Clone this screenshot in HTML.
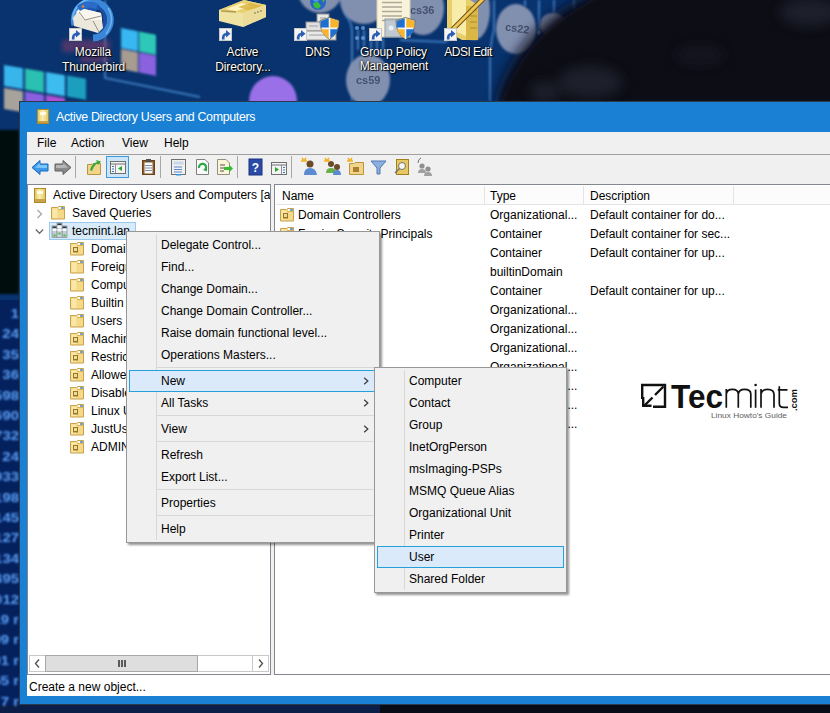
<!DOCTYPE html>
<html><head><meta charset="utf-8"><style>
*{margin:0;padding:0;box-sizing:border-box}
html,body{width:830px;height:713px;overflow:hidden}
body{position:relative;font-family:"Liberation Sans",sans-serif;font-size:12px;background:#0b2c62;color:#000}
.a{position:absolute}
.t{position:absolute;white-space:nowrap;line-height:18px;height:18px}
.dl{position:absolute;white-space:nowrap;color:#fff;line-height:15px;text-shadow:0 0 1px #000,1px 1px 1px #000,0 0 3px rgba(0,0,0,.6);text-align:center;width:120px}
.mi{position:absolute;white-space:nowrap;line-height:22px;height:22px}
.fold{position:absolute;width:14px;height:12px}
</style></head><body>
<svg class="a" style="left:0;top:0" width="830" height="713" viewBox="0 0 830 713">
<defs>
<filter id="b1" x="-20%" y="-20%" width="140%" height="140%"><feGaussianBlur stdDeviation="1"/></filter>
<filter id="b2" x="-20%" y="-20%" width="140%" height="140%"><feGaussianBlur stdDeviation="2.5"/></filter>
<filter id="b6" x="-50%" y="-50%" width="200%" height="200%"><feGaussianBlur stdDeviation="6"/></filter>
<radialGradient id="hair" cx="0.5" cy="0.5" r="0.5"><stop offset="0" stop-color="#0a0c12"/><stop offset="0.9" stop-color="#080a10"/><stop offset="1" stop-color="#0a1020"/></radialGradient>
</defs>
<rect width="830" height="713" fill="#0c2d66"/>
<rect x="0" y="0" width="830" height="713" fill="#08336e"/>
<!-- left strip -->
<rect x="-5" y="130" width="24" height="164" fill="#05070d" filter="url(#b1)"/>
<rect x="0" y="300" width="19" height="413" fill="#04215e"/>
<!-- circuit lines -->
<g stroke="#4f8fd8" stroke-width="2" fill="none" opacity="0.75" filter="url(#b1)">
<path d="M105 0 V78 L200 97"/>
<path d="M345 0 V14 Q352 22 352 32 V101"/>
<path d="M358 30 V50 M364 30 V50 M371 40 V55 M377 40 V55 M383 38 V55"/>
<path d="M494 0 V30 Q490 45 490 60 V101"/>
<path d="M400 40 L445 42 L455 35"/>
<path d="M525 0 V6 M539 0 V33 M554 0 V13 M574 0 V10"/>
</g>
<g fill="#6aa0e0" opacity="0.8"><circle cx="357" cy="28" r="2"/><circle cx="363" cy="28" r="2"/><circle cx="357" cy="38" r="2"/><circle cx="363" cy="38" r="2"/><circle cx="539" cy="33" r="2"/></g>
<!-- grey circles -->
<g fill="#8290b0" filter="url(#b1)">
<circle cx="320" cy="-9" r="22"/>
<circle cx="364" cy="0" r="24"/>
<ellipse cx="368" cy="80" rx="22" ry="26"/>
<ellipse cx="423" cy="8" rx="21" ry="27"/>
<ellipse cx="474" cy="10" rx="16" ry="30"/>
<ellipse cx="516" cy="29" rx="20" ry="25"/>
<ellipse cx="553" cy="25" rx="13" ry="12"/>
</g>
<g fill="#3c4660" font-family="Liberation Sans" font-size="11" font-weight="bold" opacity="0.85">
<text x="356" y="84">cs59</text><text x="410" y="14">cs36</text><text x="505" y="32" transform="rotate(8 516 29)">cs22</text>
</g>
<!-- purple circle -->
<ellipse cx="273" cy="101" rx="24" ry="25" fill="#9a6fe8" filter="url(#b1)"/>
<!-- head (dark) -->
<path d="M586 -6 C 552 10, 512 40, 493 104 L835 104 L835 -6 Z" fill="#0a0e1c" filter="url(#b6)" opacity="0.8"/>
<path d="M598 -4 C 562 14, 520 44, 500 104 L835 104 L835 -4 Z" fill="#080a15" filter="url(#b2)"/>
<g fill="#2a2e3c" opacity="0.55" filter="url(#b6)"><ellipse cx="590" cy="82" rx="32" ry="16"/><ellipse cx="545" cy="92" rx="15" ry="10"/><ellipse cx="810" cy="12" rx="30" ry="14"/><ellipse cx="700" cy="55" rx="25" ry="10" opacity="0.5"/></g>
<!-- bottom strip -->
<rect x="0" y="705" width="830" height="8" fill="#0a1e48"/>
<rect x="380" y="705" width="450" height="8" fill="#070b16"/>
<!-- tiles top-left -->
<g filter="url(#b1)" transform="translate(4 65) skewY(9.5) translate(-4 -65)">
<rect x="4" y="65" width="19" height="21" fill="#38b6ec"/>
<rect x="25" y="65" width="19" height="21" fill="#2cc0b2"/>
<rect x="46" y="65" width="19" height="21" fill="#3cbcf0"/>
<rect x="67" y="65" width="19" height="21" fill="#1c9fbf"/>
<rect x="4" y="88" width="19" height="21" fill="#a8a29c"/>
<rect x="25" y="88" width="19" height="21" fill="#8a5ee0"/>
<rect x="46" y="88" width="19" height="21" fill="#b050d8"/>
</g>
<g filter="url(#b1)" transform="translate(121 28) skewY(11) translate(-121 -28)">
<rect x="121" y="28" width="17" height="20" fill="#38b8f0"/>
<rect x="139" y="28" width="17" height="20" fill="#2ec8b8"/>
<rect x="121" y="49" width="17" height="20" fill="#a89c90"/>
<rect x="139" y="49" width="17" height="20" fill="#8a62e0"/>
</g>
<g fill="#8a3a6a" opacity="0.55" filter="url(#b2)"><rect x="62" y="40" width="48" height="12"/><rect x="80" y="55" width="30" height="8"/></g>
<!-- numbers on left strip -->
<g fill="#5a9ef4" font-family="Liberation Sans" font-size="13" font-weight="bold" text-anchor="end" filter="url(#b1)" opacity="1" transform="translate(19 0) scale(1.15 1) translate(-19 0)"><text x="19" y="318.0">1</text><text x="19" y="338.4">24</text><text x="19" y="358.8">35</text><text x="19" y="379.2">36</text><text x="19" y="399.6">598</text><text x="19" y="420.0">690</text><text x="19" y="440.4">732</text><text x="19" y="460.8">24</text><text x="19" y="481.2">933</text><text x="19" y="501.6">198</text><text x="19" y="522.0">145</text><text x="19" y="542.4">127</text><text x="19" y="562.8">134</text><text x="19" y="583.2">1495</text><text x="19" y="603.6">012</text><text x="19" y="624.0">19 r</text><text x="19" y="644.4">09 r</text><text x="19" y="664.8">01 r</text><text x="19" y="685.2">55 r</text><text x="19" y="705.6">7 r</text></g>
</svg>
<svg class="a" style="left:0;top:0" width="600" height="101" viewBox="0 0 600 101">
<!-- thunderbird -->
<path d="M75 25 A18 18 0 1 1 93 38" fill="none" stroke="#3a86d8" stroke-width="7"/>
<path d="M73 20 A20 20 0 0 1 90 -1" fill="none" stroke="#6ab4f0" stroke-width="2"/>
<path d="M80 23 A13 13 0 1 1 96 32" fill="none" stroke="#1c4fa2" stroke-width="3"/>
<path d="M108 8 Q116 20 106 34" fill="none" stroke="#7ac0f4" stroke-width="1.5" opacity="0.8"/>
<ellipse cx="89" cy="7" rx="11" ry="5" fill="#1f58b0"/>
<path d="M73 18 L80 8 L101 13 L103 28 L98 33 L74 26 Z" fill="#ece8dc"/>
<path d="M76 12 L80 8 L101 13 L102 20 L84 20 Z" fill="#f8f6ee"/>
<path d="M79 12 L85 20 L101 16 M93 21 L99 32" fill="none" stroke="#8a8578" stroke-width="0.9"/>
<path d="M77 6 Q86 -1 98 4 L96 9 Q88 5 80 11 Z" fill="#2a6cc8"/>
<circle cx="83" cy="6.5" r="1.2" fill="#f08020"/>
<!-- AD slab -->
<path d="M219 10 L244 0 L266 5 L266 17 L243 27 L219 21 Z" fill="#efe3a4"/>
<path d="M219 10 L244 0 L266 5 L243 13 Z" fill="#e8d070"/>
<path d="M226 9 L242 3 L252 6 L236 11 Z" fill="#fff4c0"/>
<path d="M238 7 L250 3 L262 6 L248 10 Z" fill="#d8b040" opacity="0.8"/>
<path d="M221 11 L236 12" stroke="#8a7020" stroke-width="1.5" opacity="0.6"/>
<path d="M243 13 L266 5 L266 17 L243 27 Z" fill="#ecdc9a"/>
<path d="M255 12 V14 M258 11 V13 M261 10 V12" stroke="#8a8060" stroke-width="1.2"/>
<!-- DNS -->
<circle cx="318" cy="2" r="8" fill="#2a62c8"/><path d="M313 3 L318 2 L321 6 L318 9 L314 7Z" fill="#38c038"/><path d="M322 -2 L325 0 L323 3Z" fill="#38c038"/><circle cx="316" cy="-1" r="3" fill="#5ab0f0" opacity="0.7"/>
<rect x="317" y="14" width="12" height="10" fill="#e8e8e8" stroke="#909090"/>
<rect x="306" y="22" width="16" height="9" fill="#e0e0e0" stroke="#909090"/>
<rect x="306" y="31" width="30" height="9" fill="#e8e8e8" stroke="#909090"/>
<path d="M309 26 H318 M309 35 H330 M320 18 H326" stroke="#a0a0a0"/>
<!-- GPM -->
<rect x="377" y="-2" width="33" height="39" fill="#f8f3da" stroke="#d8d0b0"/>
<path d="M382 2.5 H402 M382 7 H402 M382 11.5 H402 M382 16 H402 M382 20.5 H398" stroke="#b0a898" stroke-width="1.3"/>
<rect x="385" y="19" width="16" height="18" fill="#b8c4d0" stroke="#8090a0" opacity="0.85"/>
<circle cx="391" cy="28" r="2.5" fill="#e8eef4"/>
<!-- ADSI -->
<path d="M447 0 L470 0 L478 5 L478 40 L462 40 L447 32 Z" fill="#e8cf6a"/>
<path d="M452 0 L466 0 L466 36 L452 30 Z" fill="#f8eca8"/>
<path d="M466 6 L478 6 L478 40 L466 40Z" fill="#d9b848"/>
<path d="M470 10 H477 M470 16 H477 M470 22 H477 M470 28 H477" stroke="#b08a28"/>
<path d="M452 30 L484 -2" stroke="#6a5020" stroke-width="5"/>
<path d="M452 30 L484 -2" stroke="#f0c850" stroke-width="3"/>
<path d="M449 34 L452 28 L455 31 Z" fill="#303030"/>
</svg>
<svg class="a" style="left:319px;top:17px" width="21" height="23" viewBox="0 0 21 23"><path d="M10.5 0.5 L20 3.5 Q20.5 16 10.5 22.5 Q0.5 16 1 3.5 Z" fill="#f4f4f4" stroke="#5a5a40" stroke-width="0.8"/><path d="M11.3 1.3 L19.3 3.9 L19.3 10.6 L11.3 10.6Z" fill="#f7b42c"/><path d="M9.7 1.3 L1.7 3.9 L1.7 10.6 L9.7 10.6Z" fill="#1f6fd0"/><path d="M1.8 12.2 L9.7 12.2 L9.7 21.2 Q3 16.5 1.8 12.2Z" fill="#f7b42c"/><path d="M19.2 12.2 L11.3 12.2 L11.3 21.2 Q18 16.5 19.2 12.2Z" fill="#1f6fd0"/></svg>
<svg class="a" style="left:395px;top:17px" width="21" height="23" viewBox="0 0 21 23"><path d="M10.5 0.5 L20 3.5 Q20.5 16 10.5 22.5 Q0.5 16 1 3.5 Z" fill="#f4f4f4" stroke="#5a5a40" stroke-width="0.8"/><path d="M11.3 1.3 L19.3 3.9 L19.3 10.6 L11.3 10.6Z" fill="#f7b42c"/><path d="M9.7 1.3 L1.7 3.9 L1.7 10.6 L9.7 10.6Z" fill="#1f6fd0"/><path d="M1.8 12.2 L9.7 12.2 L9.7 21.2 Q3 16.5 1.8 12.2Z" fill="#f7b42c"/><path d="M19.2 12.2 L11.3 12.2 L11.3 21.2 Q18 16.5 19.2 12.2Z" fill="#1f6fd0"/></svg>
<svg class="a" style="left:69px;top:28px" width="13" height="13" viewBox="0 0 13 13"><rect x="0.5" y="0.5" width="12" height="12" fill="#f4f4f4" stroke="#c8c8c8"/><path d="M2.8 11.5 Q2.5 5.5 7 4.8 L7 2 L11.5 5.8 L7 9.6 L7 7.6 Q5.2 7.8 5.6 11.5 Z" fill="#2c5fb4"/></svg>
<svg class="a" style="left:219px;top:28px" width="13" height="13" viewBox="0 0 13 13"><rect x="0.5" y="0.5" width="12" height="12" fill="#f4f4f4" stroke="#c8c8c8"/><path d="M2.8 11.5 Q2.5 5.5 7 4.8 L7 2 L11.5 5.8 L7 9.6 L7 7.6 Q5.2 7.8 5.6 11.5 Z" fill="#2c5fb4"/></svg>
<svg class="a" style="left:294px;top:28px" width="13" height="13" viewBox="0 0 13 13"><rect x="0.5" y="0.5" width="12" height="12" fill="#f4f4f4" stroke="#c8c8c8"/><path d="M2.8 11.5 Q2.5 5.5 7 4.8 L7 2 L11.5 5.8 L7 9.6 L7 7.6 Q5.2 7.8 5.6 11.5 Z" fill="#2c5fb4"/></svg>
<svg class="a" style="left:369px;top:28px" width="13" height="13" viewBox="0 0 13 13"><rect x="0.5" y="0.5" width="12" height="12" fill="#f4f4f4" stroke="#c8c8c8"/><path d="M2.8 11.5 Q2.5 5.5 7 4.8 L7 2 L11.5 5.8 L7 9.6 L7 7.6 Q5.2 7.8 5.6 11.5 Z" fill="#2c5fb4"/></svg>
<svg class="a" style="left:444px;top:28px" width="13" height="13" viewBox="0 0 13 13"><rect x="0.5" y="0.5" width="12" height="12" fill="#f4f4f4" stroke="#c8c8c8"/><path d="M2.8 11.5 Q2.5 5.5 7 4.8 L7 2 L11.5 5.8 L7 9.6 L7 7.6 Q5.2 7.8 5.6 11.5 Z" fill="#2c5fb4"/></svg>
<div class="dl" style="left:33px;top:44.5px;letter-spacing:-0.15px">Mozilla</div>
<div class="dl" style="left:33.5px;top:59.5px;letter-spacing:-0.15px">Thunderbird</div>
<div class="dl" style="left:182.5px;top:45.0px;letter-spacing:-0.15px">Active</div>
<div class="dl" style="left:183px;top:59.5px;letter-spacing:-0.15px">Directory...</div>
<div class="dl" style="left:257.5px;top:44.5px;letter-spacing:-0.15px">DNS</div>
<div class="dl" style="left:333.5px;top:44.5px;letter-spacing:-0.15px">Group Policy</div>
<div class="dl" style="left:334px;top:58.5px;letter-spacing:-0.15px">Management</div>
<div class="dl" style="left:408px;top:44.5px;letter-spacing:-0.5px">ADSI Edit</div>
<div class="a" style="left:19px;top:101px;width:830px;height:604px;background:#1a80d4;border:1px solid #2a3a4a;border-right:none"></div>
<div class="a" style="left:37px;top:109px;width:12px;height:15px;background:linear-gradient(90deg,#e3c868,#fbeeb0 45%,#e3c868);border:1px solid #b08a28"></div>
<div class="a" style="left:40px;top:112px;width:6px;height:3px;background:#fffbe6"></div>
<div class="a" style="left:38px;top:121px;width:10px;height:2px;background:#c9a040"></div>
<div class="t" style="left:56px;top:108px;color:#fff;font-size:12.4px;letter-spacing:-0.32px">Active Directory Users and Computers</div>
<div class="a" style="left:27px;top:132px;width:803px;height:564px;background:#f0f0f0"></div>
<div class="t" style="left:37px;top:134px;color:#000;">File</div>
<div class="t" style="left:71px;top:134px;color:#000;">Action</div>
<div class="t" style="left:122px;top:134px;color:#000;">View</div>
<div class="t" style="left:164px;top:134px;color:#000;">Help</div>
<div class="a" style="left:27px;top:154px;width:803px;height:1px;background:#a0a0a0"></div>
<svg class="a" style="left:27px;top:155px" width="420" height="29" viewBox="27 155 420 29">
<!-- separators -->
<path d="M75.5 156 V178 M160.5 156 V178 M237.5 156 V178 M291.5 156 V178" stroke="#a8a8a8"/>
<!-- back arrow (blue) -->
<path d="M32 167.5 L40 160.5 L40 164 L48 164 L48 171 L40 171 L40 174.5 Z" fill="#3a9ae8" stroke="#1a68c0" stroke-width="1"/>
<path d="M35 167.5 L40 163 L40 165 L47 165 L47 168 L40 168Z" fill="#8fd0ff" opacity="0.8"/>
<!-- forward arrow (grey) -->
<path d="M71 167.5 L63 160.5 L63 164 L55 164 L55 171 L63 171 L63 174.5 Z" fill="#8a8a8a" stroke="#606060" stroke-width="1"/>
<path d="M68 167.5 L63 163 L63 165 L56 165 L56 168 L63 168Z" fill="#c0c0c0" opacity="0.8"/>
<!-- up folder -->
<path d="M87.5 164.5 H92 L93 163.5 H100.5 V174.5 H87.5 Z" fill="#f1d48a" stroke="#b8963e"/>
<path d="M90 170 Q92 163 97 162 L96 160 L101 161.5 L98 165 L97.5 163.5 Q94 165 92 171Z" fill="#3aa83a"/>
<!-- pressed show/hide tree -->
<rect x="106.5" y="156.5" width="22" height="21" fill="#cce4f7" stroke="#3c9ae0"/>
<rect x="110.5" y="161.5" width="15" height="12" fill="#f4f4f4" stroke="#707070"/>
<path d="M111 164 H125" stroke="#707070"/>
<path d="M115.5 164 V173" stroke="#909090"/>
<path d="M112 166.5 H114 M112 169 H114 M112 171.5 H114" stroke="#3a78c8"/>
<path d="M122 166 L118 168.5 L122 171 Z" fill="#2aa82a"/>
<!-- clipboard -->
<rect x="142.5" y="160.5" width="12" height="14" fill="#8a5a2a" stroke="#6a4018"/>
<rect x="144.5" y="162.5" width="8" height="11" fill="#fafafa"/>
<path d="M145 165.5 H152 M145 168 H152 M145 170.5 H152" stroke="#8090a8"/>
<rect x="146" y="159" width="5" height="3" fill="#505050"/>
<!-- properties window -->
<rect x="171.5" y="159.5" width="14" height="15" fill="#f0f0f0" stroke="#707070"/>
<rect x="173.5" y="161.5" width="10" height="3" fill="#c8d8e8"/>
<path d="M174 167 H182 M174 169.5 H182 M174 172 H182" stroke="#5a88c8"/>
<rect x="176" y="174" width="5" height="1.5" fill="#2a98e8"/>
<!-- refresh doc -->
<path d="M196.5 159.5 H205 L208.5 163 V174.5 H196.5 Z" fill="#fafafa" stroke="#808080"/>
<path d="M199 168 A3.6 3.6 0 1 1 205.5 169.5" fill="none" stroke="#2aa84a" stroke-width="2.2"/>
<path d="M203 170 L207 171.5 L207 167 Z" fill="#2aa84a"/>
<!-- export list -->
<path d="M217.5 159.5 H226 L229.5 163 V174.5 H217.5 Z" fill="#fbf4d8" stroke="#909080"/>
<path d="M220 165 H225 M220 168 H224 M220 171 H224" stroke="#505050"/>
<path d="M224 167 H229 V164.5 L233 168.5 L229 172.5 V170 H224 Z" fill="#3ab83a"/>
<!-- help -->
<rect x="249" y="159" width="13" height="16" fill="#2a4aa8" stroke="#1a3080"/>
<text x="255.5" y="172" font-family="Liberation Sans" font-size="12" font-weight="bold" fill="#fff" text-anchor="middle">?</text>
<!-- action pane -->
<rect x="271.5" y="162.5" width="15" height="12" fill="#f4f4f4" stroke="#707070"/>
<path d="M272 165 H286" stroke="#707070"/>
<path d="M281.5 165 V174" stroke="#909090"/>
<path d="M283 167.5 H285 M283 170 H285 M283 172.5 H285" stroke="#3a78c8"/>
<path d="M275 167 L279 169.5 L275 172 Z" fill="#2aa82a"/>
<!-- new user -->
<circle cx="310" cy="164" r="3.5" fill="#6a4a2a"/>
<path d="M304 175 Q304 168 310 168 Q316 168 317 175 Z" fill="#5a8ad0"/>
<path d="M302 158 L304 161 M306 158 L304 161 M301 161 H307" stroke="#f5b020" stroke-width="1.5"/>
<!-- new group -->
<circle cx="331" cy="164" r="3" fill="#6a4a2a"/>
<path d="M326 173 Q326 168 331 168 Q336 168 336 173 Z" fill="#6ab04a"/>
<circle cx="337" cy="167" r="3" fill="#6a4a2a"/>
<path d="M333 175 Q333 170 337 170 Q341 170 341 175 Z" fill="#5a8ad0"/>
<path d="M325 158 L327 161 M329 158 L327 161 M324 161 H330" stroke="#f5b020" stroke-width="1.5"/>
<!-- new OU -->
<path d="M349.5 163.5 H354 L355 162.5 H363.5 V174.5 H349.5 Z" fill="#f1d48a" stroke="#b8963e"/>
<rect x="353" y="167" width="6" height="5" fill="#a88030"/>
<path d="M348 158 L350 161 M352 158 L350 161 M347 161 H353" stroke="#f5b020" stroke-width="1.5"/>
<!-- filter -->
<path d="M371 161 H386 L380 168 V174 L377 174 V168 Z" fill="#8ab0e0" stroke="#5078b0"/>
<!-- find -->
<rect x="396.5" y="159.5" width="12" height="15" fill="#e8c860" stroke="#a08020"/>
<circle cx="402" cy="166" r="3.5" fill="#f8f8f0" stroke="#707070"/>
<path d="M399.5 168.5 L395 173" stroke="#707070" stroke-width="1.5"/>
<!-- add to group -->
<circle cx="422" cy="166" r="2.6" fill="#909090"/><path d="M418 173 Q418 169 422 169 Q426 169 426 173Z" fill="#a0a0a0"/>
<circle cx="428" cy="169" r="2.6" fill="#909090"/><path d="M424 176 Q424 172 428 172 Q432 172 432 176Z" fill="#a0a0a0"/>
<path d="M418 163 Q418 159 421 158" fill="none" stroke="#707070"/>
</svg>
<div class="a" style="left:27px;top:184px;width:244px;height:491px;background:#fff;border:1px solid #828790"></div>
<div class="a" style="left:274px;top:184px;width:560px;height:491px;background:#fff;border:1px solid #828790"></div>
<div class="a" style="left:28px;top:185px;width:242px;height:470px;overflow:hidden">
<div class="t" style="left:25px;top:0.5px;">Active Directory Users and Computers [addc.tecmint.lan]</div>
<div class="t" style="left:44px;top:18.5px;">Saved Queries</div>
<div class="a" style="left:21px;top:37px;width:87px;height:18px;background:#d9ebf9;border:1px solid #99c9ef"></div>
<div class="t" style="left:44px;top:36.5px;">tecmint.lan</div>
<div class="t" style="left:63px;top:54.5px;">Domain Controllers</div>
<div class="t" style="left:63px;top:72.5px;">ForeignSecurityPrincipals</div>
<div class="t" style="left:63px;top:90.5px;">Computers</div>
<div class="t" style="left:63px;top:108.5px;">Builtin</div>
<div class="t" style="left:63px;top:126.5px;">Users</div>
<div class="t" style="left:63px;top:144.5px;">Machines</div>
<div class="t" style="left:63px;top:162.5px;">Restricted</div>
<div class="t" style="left:63px;top:180.5px;">Allowed</div>
<div class="t" style="left:63px;top:198.5px;">Disabled</div>
<div class="t" style="left:63px;top:216.5px;">Linux Users</div>
<div class="t" style="left:63px;top:234.5px;">JustUsers</div>
<div class="t" style="left:63px;top:252.5px;">ADMINS</div>
</div>
<div class="a" style="left:34px;top:188px;width:12px;height:15px;background:linear-gradient(90deg,#e3c868,#fbeeb0 45%,#e3c868);border:1px solid #b08a28"></div>
<div class="a" style="left:37px;top:191px;width:6px;height:3px;background:#fffbe6"></div>
<div class="a" style="left:35px;top:199px;width:10px;height:3px;background:#c9a24a"></div>
<svg class="a" style="left:51px;top:206px" width="15" height="14" viewBox="0 0 15 14"><path d="M0.5 13 V1.5 H6.5 L7.5 0.5 H13.5 V13 Z" fill="#f5d888" stroke="#c9a24e"/><path d="M1.5 2.5 H6.5 V12 H1.5Z" fill="#fbe7a6"/><path d="M7 3.5 H13" stroke="#d9b65e"/><rect x="8" y="1.2" width="2.2" height="1.6" fill="#ffffff"/><rect x="10.2" y="1.2" width="2.5" height="1.6" fill="#3a8ae8"/></svg>
<svg class="a" style="left:70px;top:242px" width="15" height="14" viewBox="0 0 15 14"><path d="M0.5 13 V1.5 H6.5 L7.5 0.5 H13.5 V13 Z" fill="#f5d888" stroke="#c9a24e"/><path d="M1.5 2.5 H6.5 V12 H1.5Z" fill="#fbe7a6"/><path d="M7 3.5 H13" stroke="#d9b65e"/><rect x="8" y="1.2" width="2.2" height="1.6" fill="#ffffff"/><rect x="10.2" y="1.2" width="2.5" height="1.6" fill="#3a8ae8"/><rect x="3" y="5" width="5" height="5.5" fill="#9a7420"/><rect x="4" y="6" width="3" height="3" fill="#e8dca0"/></svg>
<svg class="a" style="left:70px;top:260px" width="15" height="14" viewBox="0 0 15 14"><path d="M0.5 13 V1.5 H6.5 L7.5 0.5 H13.5 V13 Z" fill="#f5d888" stroke="#c9a24e"/><path d="M1.5 2.5 H6.5 V12 H1.5Z" fill="#fbe7a6"/><path d="M7 3.5 H13" stroke="#d9b65e"/><rect x="8" y="1.2" width="2.2" height="1.6" fill="#ffffff"/><rect x="10.2" y="1.2" width="2.5" height="1.6" fill="#3a8ae8"/></svg>
<svg class="a" style="left:70px;top:278px" width="15" height="14" viewBox="0 0 15 14"><path d="M0.5 13 V1.5 H6.5 L7.5 0.5 H13.5 V13 Z" fill="#f5d888" stroke="#c9a24e"/><path d="M1.5 2.5 H6.5 V12 H1.5Z" fill="#fbe7a6"/><path d="M7 3.5 H13" stroke="#d9b65e"/><rect x="8" y="1.2" width="2.2" height="1.6" fill="#ffffff"/><rect x="10.2" y="1.2" width="2.5" height="1.6" fill="#3a8ae8"/></svg>
<svg class="a" style="left:70px;top:296px" width="15" height="14" viewBox="0 0 15 14"><path d="M0.5 13 V1.5 H6.5 L7.5 0.5 H13.5 V13 Z" fill="#f5d888" stroke="#c9a24e"/><path d="M1.5 2.5 H6.5 V12 H1.5Z" fill="#fbe7a6"/><path d="M7 3.5 H13" stroke="#d9b65e"/><rect x="8" y="1.2" width="2.2" height="1.6" fill="#ffffff"/><rect x="10.2" y="1.2" width="2.5" height="1.6" fill="#3a8ae8"/></svg>
<svg class="a" style="left:70px;top:314px" width="15" height="14" viewBox="0 0 15 14"><path d="M0.5 13 V1.5 H6.5 L7.5 0.5 H13.5 V13 Z" fill="#f5d888" stroke="#c9a24e"/><path d="M1.5 2.5 H6.5 V12 H1.5Z" fill="#fbe7a6"/><path d="M7 3.5 H13" stroke="#d9b65e"/><rect x="8" y="1.2" width="2.2" height="1.6" fill="#ffffff"/><rect x="10.2" y="1.2" width="2.5" height="1.6" fill="#3a8ae8"/></svg>
<svg class="a" style="left:70px;top:332px" width="15" height="14" viewBox="0 0 15 14"><path d="M0.5 13 V1.5 H6.5 L7.5 0.5 H13.5 V13 Z" fill="#f5d888" stroke="#c9a24e"/><path d="M1.5 2.5 H6.5 V12 H1.5Z" fill="#fbe7a6"/><path d="M7 3.5 H13" stroke="#d9b65e"/><rect x="8" y="1.2" width="2.2" height="1.6" fill="#ffffff"/><rect x="10.2" y="1.2" width="2.5" height="1.6" fill="#3a8ae8"/><rect x="3" y="5" width="5" height="5.5" fill="#9a7420"/><rect x="4" y="6" width="3" height="3" fill="#e8dca0"/></svg>
<svg class="a" style="left:70px;top:350px" width="15" height="14" viewBox="0 0 15 14"><path d="M0.5 13 V1.5 H6.5 L7.5 0.5 H13.5 V13 Z" fill="#f5d888" stroke="#c9a24e"/><path d="M1.5 2.5 H6.5 V12 H1.5Z" fill="#fbe7a6"/><path d="M7 3.5 H13" stroke="#d9b65e"/><rect x="8" y="1.2" width="2.2" height="1.6" fill="#ffffff"/><rect x="10.2" y="1.2" width="2.5" height="1.6" fill="#3a8ae8"/><rect x="3" y="5" width="5" height="5.5" fill="#9a7420"/><rect x="4" y="6" width="3" height="3" fill="#e8dca0"/></svg>
<svg class="a" style="left:70px;top:368px" width="15" height="14" viewBox="0 0 15 14"><path d="M0.5 13 V1.5 H6.5 L7.5 0.5 H13.5 V13 Z" fill="#f5d888" stroke="#c9a24e"/><path d="M1.5 2.5 H6.5 V12 H1.5Z" fill="#fbe7a6"/><path d="M7 3.5 H13" stroke="#d9b65e"/><rect x="8" y="1.2" width="2.2" height="1.6" fill="#ffffff"/><rect x="10.2" y="1.2" width="2.5" height="1.6" fill="#3a8ae8"/><rect x="3" y="5" width="5" height="5.5" fill="#9a7420"/><rect x="4" y="6" width="3" height="3" fill="#e8dca0"/></svg>
<svg class="a" style="left:70px;top:386px" width="15" height="14" viewBox="0 0 15 14"><path d="M0.5 13 V1.5 H6.5 L7.5 0.5 H13.5 V13 Z" fill="#f5d888" stroke="#c9a24e"/><path d="M1.5 2.5 H6.5 V12 H1.5Z" fill="#fbe7a6"/><path d="M7 3.5 H13" stroke="#d9b65e"/><rect x="8" y="1.2" width="2.2" height="1.6" fill="#ffffff"/><rect x="10.2" y="1.2" width="2.5" height="1.6" fill="#3a8ae8"/><rect x="3" y="5" width="5" height="5.5" fill="#9a7420"/><rect x="4" y="6" width="3" height="3" fill="#e8dca0"/></svg>
<svg class="a" style="left:70px;top:404px" width="15" height="14" viewBox="0 0 15 14"><path d="M0.5 13 V1.5 H6.5 L7.5 0.5 H13.5 V13 Z" fill="#f5d888" stroke="#c9a24e"/><path d="M1.5 2.5 H6.5 V12 H1.5Z" fill="#fbe7a6"/><path d="M7 3.5 H13" stroke="#d9b65e"/><rect x="8" y="1.2" width="2.2" height="1.6" fill="#ffffff"/><rect x="10.2" y="1.2" width="2.5" height="1.6" fill="#3a8ae8"/><rect x="3" y="5" width="5" height="5.5" fill="#9a7420"/><rect x="4" y="6" width="3" height="3" fill="#e8dca0"/></svg>
<svg class="a" style="left:70px;top:422px" width="15" height="14" viewBox="0 0 15 14"><path d="M0.5 13 V1.5 H6.5 L7.5 0.5 H13.5 V13 Z" fill="#f5d888" stroke="#c9a24e"/><path d="M1.5 2.5 H6.5 V12 H1.5Z" fill="#fbe7a6"/><path d="M7 3.5 H13" stroke="#d9b65e"/><rect x="8" y="1.2" width="2.2" height="1.6" fill="#ffffff"/><rect x="10.2" y="1.2" width="2.5" height="1.6" fill="#3a8ae8"/><rect x="3" y="5" width="5" height="5.5" fill="#9a7420"/><rect x="4" y="6" width="3" height="3" fill="#e8dca0"/></svg>
<svg class="a" style="left:70px;top:440px" width="15" height="14" viewBox="0 0 15 14"><path d="M0.5 13 V1.5 H6.5 L7.5 0.5 H13.5 V13 Z" fill="#f5d888" stroke="#c9a24e"/><path d="M1.5 2.5 H6.5 V12 H1.5Z" fill="#fbe7a6"/><path d="M7 3.5 H13" stroke="#d9b65e"/><rect x="8" y="1.2" width="2.2" height="1.6" fill="#ffffff"/><rect x="10.2" y="1.2" width="2.5" height="1.6" fill="#3a8ae8"/><rect x="3" y="5" width="5" height="5.5" fill="#9a7420"/><rect x="4" y="6" width="3" height="3" fill="#e8dca0"/></svg>
<svg class="a" style="left:35px;top:208px" width="9" height="12"><path d="M2.5 2 L6.5 6 L2.5 10" fill="none" stroke="#a6a6a6" stroke-width="1.3"/></svg>
<svg class="a" style="left:34px;top:227px" width="11" height="9"><path d="M1.8 2.5 L5.5 6.3 L9.2 2.5" fill="none" stroke="#6a6a6a" stroke-width="1.3"/></svg>
<svg class="a" style="left:51px;top:222px" width="17" height="17" viewBox="51 222 17 17"><rect x="52" y="226" width="5" height="11.5" fill="#c4ccd4" stroke="#8a929a" stroke-width="0.8"/><rect x="62" y="226" width="5" height="11.5" fill="#c4ccd4" stroke="#8a929a" stroke-width="0.8"/><rect x="57" y="223" width="5" height="14.5" fill="#d0d6dc" stroke="#8a929a" stroke-width="0.8"/><rect x="52.5" y="226.5" width="4" height="1.5" fill="#2a3444"/><rect x="62.5" y="226.5" width="4" height="1.5" fill="#2a3444"/><rect x="57.5" y="223.5" width="4" height="1.5" fill="#2a3444"/><rect x="52.5" y="229" width="4" height="2" fill="#fafafa"/><rect x="62.5" y="229" width="4" height="2" fill="#fafafa"/><rect x="57.5" y="226" width="4" height="2" fill="#fafafa"/><rect x="57.5" y="229" width="4" height="2" fill="#fafafa"/><rect x="53.5" y="234.5" width="2" height="2" fill="#38c038"/><rect x="63.5" y="234.5" width="2" height="2" fill="#38c038"/><rect x="58.5" y="232.5" width="2" height="2" fill="#38c038"/></svg>
<div class="a" style="left:29px;top:655px;width:240px;height:17px;background:#fff;border:1px solid #c8c8c8"></div>
<div class="a" style="left:45px;top:655px;width:153px;height:17px;background:#dedede;border:1px solid #a8a8a8"></div>
<div class="a" style="left:252px;top:656px;width:1px;height:15px;background:#c8c8c8"></div>
<svg class="a" style="left:33px;top:658px" width="9" height="11"><path d="M6 1.5 L2.5 5.5 L6 9.5" fill="none" stroke="#555" stroke-width="1.4"/></svg>
<svg class="a" style="left:256px;top:658px" width="9" height="11"><path d="M3 1.5 L6.5 5.5 L3 9.5" fill="none" stroke="#555" stroke-width="1.4"/></svg>
<div class="a" style="left:118px;top:660px;width:2px;height:7px;background:#5a5a5a"></div>
<div class="a" style="left:121px;top:660px;width:2px;height:7px;background:#5a5a5a"></div>
<div class="a" style="left:124px;top:660px;width:2px;height:7px;background:#5a5a5a"></div>
<div class="a" style="left:276px;top:186px;width:560px;height:19px;background:#fcfcfc;border-bottom:1px solid #e5e5e5"></div>
<div class="a" style="left:484px;top:186px;width:1px;height:19px;background:#e5e5e5"></div>
<div class="a" style="left:583px;top:186px;width:1px;height:19px;background:#e5e5e5"></div>
<div class="a" style="left:733px;top:186px;width:1px;height:19px;background:#e5e5e5"></div>
<div class="t" style="left:282px;top:186.5px;color:#000;">Name</div>
<div class="t" style="left:490px;top:186.5px;color:#000;">Type</div>
<div class="t" style="left:590px;top:186.5px;color:#000;">Description</div>
<svg class="a" style="left:280px;top:208px" width="15" height="14" viewBox="0 0 15 14"><path d="M0.5 13 V1.5 H6.5 L7.5 0.5 H13.5 V13 Z" fill="#f5d888" stroke="#c9a24e"/><path d="M1.5 2.5 H6.5 V12 H1.5Z" fill="#fbe7a6"/><path d="M7 3.5 H13" stroke="#d9b65e"/><rect x="8" y="1.2" width="2.2" height="1.6" fill="#ffffff"/><rect x="10.2" y="1.2" width="2.5" height="1.6" fill="#3a8ae8"/><rect x="3" y="5" width="5" height="5.5" fill="#9a7420"/><rect x="4" y="6" width="3" height="3" fill="#e8dca0"/></svg>
<div class="t" style="left:298px;top:205.5px;color:#000;">Domain Controllers</div>
<div class="t" style="left:490px;top:205.5px;color:#000;">Organizational...</div>
<div class="t" style="left:590px;top:205.5px;color:#000;">Default container for do...</div>
<svg class="a" style="left:280px;top:227px" width="15" height="14" viewBox="0 0 15 14"><path d="M0.5 13 V1.5 H6.5 L7.5 0.5 H13.5 V13 Z" fill="#f5d888" stroke="#c9a24e"/><path d="M1.5 2.5 H6.5 V12 H1.5Z" fill="#fbe7a6"/><path d="M7 3.5 H13" stroke="#d9b65e"/><rect x="8" y="1.2" width="2.2" height="1.6" fill="#ffffff"/><rect x="10.2" y="1.2" width="2.5" height="1.6" fill="#3a8ae8"/></svg>
<div class="t" style="left:298px;top:224.5px;color:#000;letter-spacing:-0.3px">ForeignSecurity</div>
<div class="t" style="left:380.5px;top:224.5px;color:#000;">Principals</div>
<div class="t" style="left:490px;top:224.5px;color:#000;">Container</div>
<div class="t" style="left:590px;top:224.5px;color:#000;">Default container for sec...</div>
<svg class="a" style="left:280px;top:246px" width="15" height="14" viewBox="0 0 15 14"><path d="M0.5 13 V1.5 H6.5 L7.5 0.5 H13.5 V13 Z" fill="#f5d888" stroke="#c9a24e"/><path d="M1.5 2.5 H6.5 V12 H1.5Z" fill="#fbe7a6"/><path d="M7 3.5 H13" stroke="#d9b65e"/><rect x="8" y="1.2" width="2.2" height="1.6" fill="#ffffff"/><rect x="10.2" y="1.2" width="2.5" height="1.6" fill="#3a8ae8"/></svg>
<div class="t" style="left:298px;top:243.5px;color:#000;">Computers</div>
<div class="t" style="left:490px;top:243.5px;color:#000;">Container</div>
<div class="t" style="left:590px;top:243.5px;color:#000;">Default container for up...</div>
<svg class="a" style="left:280px;top:265px" width="15" height="14" viewBox="0 0 15 14"><path d="M0.5 13 V1.5 H6.5 L7.5 0.5 H13.5 V13 Z" fill="#f5d888" stroke="#c9a24e"/><path d="M1.5 2.5 H6.5 V12 H1.5Z" fill="#fbe7a6"/><path d="M7 3.5 H13" stroke="#d9b65e"/><rect x="8" y="1.2" width="2.2" height="1.6" fill="#ffffff"/><rect x="10.2" y="1.2" width="2.5" height="1.6" fill="#3a8ae8"/></svg>
<div class="t" style="left:298px;top:262.5px;color:#000;">Builtin</div>
<div class="t" style="left:490px;top:262.5px;color:#000;">builtinDomain</div>
<div class="t" style="left:590px;top:262.5px;color:#000;"></div>
<svg class="a" style="left:280px;top:284px" width="15" height="14" viewBox="0 0 15 14"><path d="M0.5 13 V1.5 H6.5 L7.5 0.5 H13.5 V13 Z" fill="#f5d888" stroke="#c9a24e"/><path d="M1.5 2.5 H6.5 V12 H1.5Z" fill="#fbe7a6"/><path d="M7 3.5 H13" stroke="#d9b65e"/><rect x="8" y="1.2" width="2.2" height="1.6" fill="#ffffff"/><rect x="10.2" y="1.2" width="2.5" height="1.6" fill="#3a8ae8"/></svg>
<div class="t" style="left:298px;top:281.5px;color:#000;">Users</div>
<div class="t" style="left:490px;top:281.5px;color:#000;">Container</div>
<div class="t" style="left:590px;top:281.5px;color:#000;">Default container for up...</div>
<svg class="a" style="left:280px;top:303px" width="15" height="14" viewBox="0 0 15 14"><path d="M0.5 13 V1.5 H6.5 L7.5 0.5 H13.5 V13 Z" fill="#f5d888" stroke="#c9a24e"/><path d="M1.5 2.5 H6.5 V12 H1.5Z" fill="#fbe7a6"/><path d="M7 3.5 H13" stroke="#d9b65e"/><rect x="8" y="1.2" width="2.2" height="1.6" fill="#ffffff"/><rect x="10.2" y="1.2" width="2.5" height="1.6" fill="#3a8ae8"/><rect x="3" y="5" width="5" height="5.5" fill="#9a7420"/><rect x="4" y="6" width="3" height="3" fill="#e8dca0"/></svg>
<div class="t" style="left:298px;top:300.5px;color:#000;">Machines</div>
<div class="t" style="left:490px;top:300.5px;color:#000;">Organizational...</div>
<div class="t" style="left:590px;top:300.5px;color:#000;"></div>
<svg class="a" style="left:280px;top:322px" width="15" height="14" viewBox="0 0 15 14"><path d="M0.5 13 V1.5 H6.5 L7.5 0.5 H13.5 V13 Z" fill="#f5d888" stroke="#c9a24e"/><path d="M1.5 2.5 H6.5 V12 H1.5Z" fill="#fbe7a6"/><path d="M7 3.5 H13" stroke="#d9b65e"/><rect x="8" y="1.2" width="2.2" height="1.6" fill="#ffffff"/><rect x="10.2" y="1.2" width="2.5" height="1.6" fill="#3a8ae8"/><rect x="3" y="5" width="5" height="5.5" fill="#9a7420"/><rect x="4" y="6" width="3" height="3" fill="#e8dca0"/></svg>
<div class="t" style="left:298px;top:319.5px;color:#000;">Restricted</div>
<div class="t" style="left:490px;top:319.5px;color:#000;">Organizational...</div>
<div class="t" style="left:590px;top:319.5px;color:#000;"></div>
<svg class="a" style="left:280px;top:341px" width="15" height="14" viewBox="0 0 15 14"><path d="M0.5 13 V1.5 H6.5 L7.5 0.5 H13.5 V13 Z" fill="#f5d888" stroke="#c9a24e"/><path d="M1.5 2.5 H6.5 V12 H1.5Z" fill="#fbe7a6"/><path d="M7 3.5 H13" stroke="#d9b65e"/><rect x="8" y="1.2" width="2.2" height="1.6" fill="#ffffff"/><rect x="10.2" y="1.2" width="2.5" height="1.6" fill="#3a8ae8"/><rect x="3" y="5" width="5" height="5.5" fill="#9a7420"/><rect x="4" y="6" width="3" height="3" fill="#e8dca0"/></svg>
<div class="t" style="left:298px;top:338.5px;color:#000;">Allowed</div>
<div class="t" style="left:490px;top:338.5px;color:#000;">Organizational...</div>
<div class="t" style="left:590px;top:338.5px;color:#000;"></div>
<svg class="a" style="left:280px;top:360px" width="15" height="14" viewBox="0 0 15 14"><path d="M0.5 13 V1.5 H6.5 L7.5 0.5 H13.5 V13 Z" fill="#f5d888" stroke="#c9a24e"/><path d="M1.5 2.5 H6.5 V12 H1.5Z" fill="#fbe7a6"/><path d="M7 3.5 H13" stroke="#d9b65e"/><rect x="8" y="1.2" width="2.2" height="1.6" fill="#ffffff"/><rect x="10.2" y="1.2" width="2.5" height="1.6" fill="#3a8ae8"/><rect x="3" y="5" width="5" height="5.5" fill="#9a7420"/><rect x="4" y="6" width="3" height="3" fill="#e8dca0"/></svg>
<div class="t" style="left:298px;top:357.5px;color:#000;">Disabled</div>
<div class="t" style="left:490px;top:357.5px;color:#000;">Organizational...</div>
<div class="t" style="left:590px;top:357.5px;color:#000;"></div>
<svg class="a" style="left:280px;top:379px" width="15" height="14" viewBox="0 0 15 14"><path d="M0.5 13 V1.5 H6.5 L7.5 0.5 H13.5 V13 Z" fill="#f5d888" stroke="#c9a24e"/><path d="M1.5 2.5 H6.5 V12 H1.5Z" fill="#fbe7a6"/><path d="M7 3.5 H13" stroke="#d9b65e"/><rect x="8" y="1.2" width="2.2" height="1.6" fill="#ffffff"/><rect x="10.2" y="1.2" width="2.5" height="1.6" fill="#3a8ae8"/><rect x="3" y="5" width="5" height="5.5" fill="#9a7420"/><rect x="4" y="6" width="3" height="3" fill="#e8dca0"/></svg>
<div class="t" style="left:298px;top:376.5px;color:#000;">Linux Users</div>
<div class="t" style="left:490px;top:376.5px;color:#000;">Organizational...</div>
<div class="t" style="left:590px;top:376.5px;color:#000;"></div>
<svg class="a" style="left:280px;top:398px" width="15" height="14" viewBox="0 0 15 14"><path d="M0.5 13 V1.5 H6.5 L7.5 0.5 H13.5 V13 Z" fill="#f5d888" stroke="#c9a24e"/><path d="M1.5 2.5 H6.5 V12 H1.5Z" fill="#fbe7a6"/><path d="M7 3.5 H13" stroke="#d9b65e"/><rect x="8" y="1.2" width="2.2" height="1.6" fill="#ffffff"/><rect x="10.2" y="1.2" width="2.5" height="1.6" fill="#3a8ae8"/><rect x="3" y="5" width="5" height="5.5" fill="#9a7420"/><rect x="4" y="6" width="3" height="3" fill="#e8dca0"/></svg>
<div class="t" style="left:298px;top:395.5px;color:#000;">JustUsers</div>
<div class="t" style="left:490px;top:395.5px;color:#000;">Organizational...</div>
<div class="t" style="left:590px;top:395.5px;color:#000;"></div>
<svg class="a" style="left:280px;top:417px" width="15" height="14" viewBox="0 0 15 14"><path d="M0.5 13 V1.5 H6.5 L7.5 0.5 H13.5 V13 Z" fill="#f5d888" stroke="#c9a24e"/><path d="M1.5 2.5 H6.5 V12 H1.5Z" fill="#fbe7a6"/><path d="M7 3.5 H13" stroke="#d9b65e"/><rect x="8" y="1.2" width="2.2" height="1.6" fill="#ffffff"/><rect x="10.2" y="1.2" width="2.5" height="1.6" fill="#3a8ae8"/><rect x="3" y="5" width="5" height="5.5" fill="#9a7420"/><rect x="4" y="6" width="3" height="3" fill="#e8dca0"/></svg>
<div class="t" style="left:298px;top:414.5px;color:#000;">ADMINS</div>
<div class="t" style="left:490px;top:414.5px;color:#000;">Organizational...</div>
<div class="t" style="left:590px;top:414.5px;color:#000;"></div>
<svg class="a" style="left:630px;top:376px" width="180" height="50" viewBox="630 376 180 50">
<path d="M642.2 399 V385 H665 V406.8 H653" fill="none" stroke="#111" stroke-width="2.4"/>
<path d="M663.5 386.5 L655 395 M652.5 397.5 L644.5 405.5" stroke="#111" stroke-width="2.4"/>
<path d="M643.2 397 V405.8 H651.5" fill="none" stroke="#111" stroke-width="2.4"/>
<text x="671" y="407.8" font-family="Liberation Sans" font-weight="bold" font-size="33" textLength="52" lengthAdjust="spacingAndGlyphs" fill="#111">Tec</text>
<g fill="none" stroke="#111" stroke-width="1.7">
<path d="M726.3 407.8 V389 M726.3 394 Q727 389.3 732.3 389.3 Q738.3 389.3 738.3 394 V407.8 M738.3 394 Q739 389.3 744.5 389.3 Q750.8 389.3 750.8 394 V407.8"/>
<path d="M755.6 389.5 V407.8"/>
<path d="M761 407.8 V389 M761 394 Q762 389.3 767.5 389.3 Q774 389.3 774 394.5 V407.8"/>
<path d="M779.3 386.3 V403.5 Q779.3 407.4 783.5 407.4 H788 M777.8 389.8 H787.5"/>
</g>
<circle cx="755.6" cy="385" r="1.3" fill="#111"/>
<text transform="translate(796.5 411) rotate(-90)" font-family="Liberation Sans" font-weight="bold" font-size="9" fill="#111" textLength="22" lengthAdjust="spacingAndGlyphs">.com</text>
<text x="711" y="418" font-family="Liberation Sans" font-size="8" fill="#606060" textLength="76" lengthAdjust="spacingAndGlyphs">Linux Howto's Guide</text>
</svg>
<div class="a" style="left:27px;top:675px;width:803px;height:21px;background:#fff"></div>
<div class="t" style="left:29px;top:678px;color:#000;">Create a new object...</div>
<div class="a" style="left:128px;top:233px;width:254px;height:312px;background:rgba(0,0,0,.42);filter:blur(.8px)"></div>
<div class="a" style="left:126px;top:231px;width:254px;height:312px;background:#f0f0f0;border:1px solid #979797"></div>
<div class="a" style="left:156px;top:234px;width:1px;height:306px;background:#d7d7d7"></div>
<div class="mi" style="left:161px;top:234px">Delegate Control...</div>
<div class="mi" style="left:161px;top:256px">Find...</div>
<div class="mi" style="left:161px;top:278px">Change Domain...</div>
<div class="mi" style="left:161px;top:300px">Change Domain Controller...</div>
<div class="mi" style="left:161px;top:322px">Raise domain functional level...</div>
<div class="mi" style="left:161px;top:344px">Operations Masters...</div>
<div class="a" style="left:157px;top:367px;width:220px;height:1px;background:#d7d7d7"></div>
<div class="a" style="left:129px;top:370px;width:249px;height:22px;background:#dbeafb;border:1px solid #26a0da"></div>
<div class="mi" style="left:161px;top:370px">New</div>
<svg class="a" style="left:362px;top:376px" width="8" height="11"><path d="M2.2 1.8 L5.8 5 L2.2 8.2" fill="none" stroke="#404040" stroke-width="1.3"/></svg>
<div class="mi" style="left:161px;top:392px">All Tasks</div>
<svg class="a" style="left:362px;top:398px" width="8" height="11"><path d="M2.2 1.8 L5.8 5 L2.2 8.2" fill="none" stroke="#404040" stroke-width="1.3"/></svg>
<div class="a" style="left:157px;top:415px;width:220px;height:1px;background:#d7d7d7"></div>
<div class="mi" style="left:161px;top:418px">View</div>
<svg class="a" style="left:362px;top:424px" width="8" height="11"><path d="M2.2 1.8 L5.8 5 L2.2 8.2" fill="none" stroke="#404040" stroke-width="1.3"/></svg>
<div class="a" style="left:157px;top:441px;width:220px;height:1px;background:#d7d7d7"></div>
<div class="mi" style="left:161px;top:444px">Refresh</div>
<div class="mi" style="left:161px;top:466px">Export List...</div>
<div class="a" style="left:157px;top:489px;width:220px;height:1px;background:#d7d7d7"></div>
<div class="mi" style="left:161px;top:492px">Properties</div>
<div class="a" style="left:157px;top:515px;width:220px;height:1px;background:#d7d7d7"></div>
<div class="mi" style="left:161px;top:518px">Help</div>
<div class="a" style="left:376px;top:369px;width:193px;height:226px;background:rgba(0,0,0,.42);filter:blur(.8px)"></div>
<div class="a" style="left:374px;top:367px;width:193px;height:226px;background:#f0f0f0;border:1px solid #979797"></div>
<div class="a" style="left:404px;top:370px;width:1px;height:220px;background:#d7d7d7"></div>
<div class="mi" style="left:409px;top:370px">Computer</div>
<div class="mi" style="left:409px;top:392px">Contact</div>
<div class="mi" style="left:409px;top:414px">Group</div>
<div class="mi" style="left:409px;top:436px">InetOrgPerson</div>
<div class="mi" style="left:409px;top:458px">msImaging-PSPs</div>
<div class="mi" style="left:409px;top:480px">MSMQ Queue Alias</div>
<div class="mi" style="left:409px;top:502px">Organizational Unit</div>
<div class="mi" style="left:409px;top:524px">Printer</div>
<div class="a" style="left:377px;top:546px;width:187px;height:22px;background:#dbeafb;border:1px solid #26a0da"></div>
<div class="mi" style="left:409px;top:546px">User</div>
<div class="mi" style="left:409px;top:568px">Shared Folder</div>
</body></html>
